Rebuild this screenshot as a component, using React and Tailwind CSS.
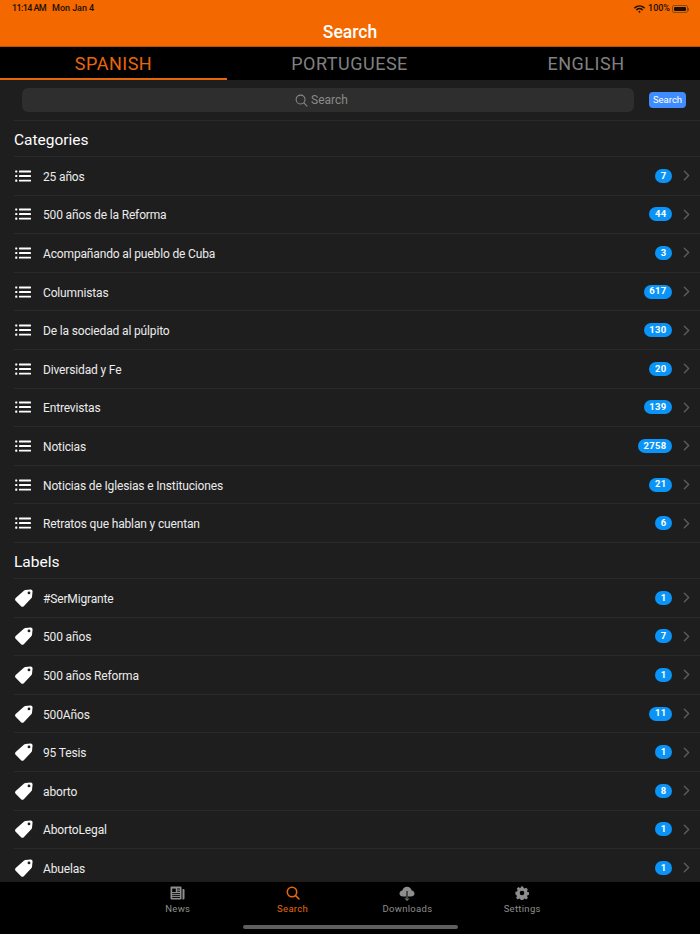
import { ChevronRight } from "lucide-react";

const categories = [
  ["25 años", 7],
  ["500 años de la Reforma", 44],
  ["Acompañando al pueblo de Cuba", 3],
  ["Columnistas", 617],
  ["De la sociedad al púlpito", 130],
  ["Diversidad y Fe", 20],
  ["Entrevistas", 139],
  ["Noticias", 2758],
  ["Noticias de Iglesias e Instituciones", 21],
  ["Retratos que hablan y cuentan", 6],
];

const labels = [
  ["#SerMigrante", 1],
  ["500 años", 7],
  ["500 años Reforma", 1],
  ["500Años", 11],
  ["95 Tesis", 1],
  ["aborto", 8],
  ["AbortoLegal", 1],
  ["Abuelas", 1],
];

function ListIcon() {
  return (
    <svg width="16" height="12" viewBox="0 0 16 12" className="text-white" fill="currentColor">
      <rect x="0.2" y="0.4" width="2.1" height="2.1" rx="0.4" />
      <rect x="0.2" y="5" width="2.1" height="2.1" rx="0.4" />
      <rect x="0.2" y="9.6" width="2.1" height="2.1" rx="0.4" />
      <rect x="4" y="0.5" width="12" height="1.9" rx="0.4" />
      <rect x="4" y="5.1" width="12" height="1.9" rx="0.4" />
      <rect x="4" y="9.7" width="12" height="1.9" rx="0.4" />
    </svg>
  );
}

function TagIcon() {
  return (
    <svg width="18" height="18" viewBox="0.7 0.7 16.6 16.6" className="text-white">
      <path
        fill="currentColor"
        fillRule="evenodd"
        d="M10.2 1.6 15 1.1c1.1-.1 2 .8 1.900 1.900l-.5 4.800c0 .4-.2.8-.5 1.100l-7.100 7.600c-.7.7-1.800.8-2.500.1L1.300 11.600c-.7-.7-.7-1.800 0-2.500l7.800-7c.3-.3.7-.5 1.100-.5ZM13.600 3a1.300 1.300 0 1 0 0 2.600 1.300 1.300 0 0 0 0-2.600Z"
      />
    </svg>
  );
}

function Row({ icon, name, count }) {
  return (
    <div className="flex h-[38.6px] items-center border-b border-[#2a2a2a] pr-[5px]">
      <div className="flex w-[29px] shrink-0 items-center pl-[1px]">{icon}</div>
      <span className="flex-1 pt-[2px] text-[12px] tracking-[-0.15px] text-[#ececec]">{name}</span>
      <span className="flex h-[14px] min-w-[16px] items-center justify-center rounded-full bg-[#0a94f8] px-[5.5px] text-[9.5px] font-bold tracking-[0.3px] text-white">
        {count}
      </span>
      <ChevronRight className="ml-[6px] text-[#5c5c5c]" size={17} strokeWidth={2} />
    </div>
  );
}

function SectionHeader({ title }) {
  return (
    <div className="flex h-[36px] items-center border-b border-[#2a2a2a] pt-[4px] text-[15.5px] text-white">
      {title}
    </div>
  );
}

function TabItem({ label, active, children }) {
  return (
    <div className={`flex w-[114.8px] flex-col items-center ${active ? "text-[#e8660a]" : "text-[#8e8e8e]"}`}>
      <div className="flex h-[18px] items-center">{children}</div>
      <span className="mt-[1px] text-[9.5px] leading-[12px] tracking-[0.3px]">{label}</span>
    </div>
  );
}

export default function App() {
  return (
    <div className="flex h-[934px] w-[700px] flex-col overflow-hidden bg-[#1e1e1e] font-['Roboto',sans-serif]">
      <header className="h-[47px] shrink-0 border-b border-[#b95208] bg-[#f36900]">
        <div className="flex h-[17px] items-center justify-between pl-[12px] pr-[11px] pt-[1px] text-[9px] font-medium text-[#1a1005]">
          <div className="flex gap-[6px]">
            <span className="tracking-[-0.6px]">11:14 AM</span>
            <span className="tracking-[-0.05px]">Mon Jan 4</span>
          </div>
          <div className="flex items-center gap-[2px]">
            <svg width="11" height="8" viewBox="0 0 20 15" fill="none" stroke="currentColor" strokeLinecap="round" strokeWidth="2.8">
              <path d="M1.500 5C6.500.6 13.500.6 18.500 5" />
              <path d="M5 8.700c3-2.600 7-2.600 10 0" />
              <circle cx="10" cy="12.800" r="1.800" fill="currentColor" stroke="none" />
            </svg>
            <span className="ml-[1px]">100%</span>
            <div className="flex items-center">
              <div className="h-[8px] w-[16px] rounded-[2px] border border-[#8a4a08] p-[1px]">
                <div className="h-full w-full rounded-[1px] bg-[#1a1005]" />
              </div>
              <div className="h-[3px] w-[1px] bg-[#8a4a08]" />
            </div>
          </div>
        </div>
        <div className="flex h-[29px] items-center justify-center pt-[1px] text-[17.5px] font-medium text-white">Search</div>
      </header>

      <nav className="flex h-[33px] shrink-0 bg-black text-[18px] tracking-[0.5px]">
        <div className="flex w-[227px] items-center justify-center border-b-2 border-[#e8660a] pt-[1px] text-[#e8660a]">SPANISH</div>
        <div className="flex flex-1 items-center justify-center pb-[1px] text-[#808080]">PORTUGUESE</div>
        <div className="flex w-[228px] items-center justify-center pb-[1px] text-[#808080]">ENGLISH</div>
      </nav>

      <main className="min-h-0 flex-1 overflow-hidden pl-[14px]">
        <div className="flex h-[41px] items-center border-b border-[#2a2a2a] pl-[8px] pr-[14px]">
          <div className="flex h-[24px] w-[612px] items-center justify-center gap-[3px] rounded-[6px] bg-[#2e2e2e] pr-[13px] text-[12px] text-[#8a8a8a]">
            <svg width="13" height="13" viewBox="0 0 14 14" fill="none" stroke="currentColor" strokeWidth="1.1" strokeLinecap="round">
              <circle cx="6" cy="6" r="4.800" />
              <path d="M9.500 9.500 13 13" />
            </svg>
            <span>Search</span>
          </div>
          <button className="ml-auto flex h-[16px] w-[37px] items-center justify-center rounded-[4px] bg-[#3f8cff] text-[9.5px] text-white">
            Search
          </button>
        </div>
        <SectionHeader title="Categories" />
        {categories.map(([name, count]) => (
          <Row key={name} icon={<ListIcon />} name={name} count={count} />
        ))}
        <SectionHeader title="Labels" />
        {labels.map(([name, count]) => (
          <Row key={name} icon={<TagIcon />} name={name} count={count} />
        ))}
      </main>

      <footer className="h-[52px] shrink-0 bg-black pt-[2px]">
        <div className="flex justify-center">
          <TabItem label="News">
            <svg width="15" height="14" viewBox="0 0 15 14">
              <rect x="0.500" y="0.500" width="11" height="13" rx="1" fill="currentColor" />
              <path d="M12.500 3h1.200c.4 0 .8.4.8.8v8.400c0 .7-.6 1.300-1.300 1.300h-.7Z" fill="currentColor" />
              <rect x="2.200" y="2.600" width="3.600" height="3.400" fill="#000" />
              <path d="M7 3h3M7 5.200h3M2.200 7.600H10M2.200 9.600H10M2.200 11.500H10" stroke="#000" strokeWidth="0.9" />
            </svg>
          </TabItem>
          <TabItem label="Search" active>
            <svg width="14" height="14" viewBox="0 0 14 14" fill="none" stroke="currentColor" strokeWidth="1.600" strokeLinecap="round">
              <circle cx="6" cy="6" r="4.700" />
              <path d="M9.600 9.600 13 13" />
            </svg>
          </TabItem>
          <TabItem label="Downloads">
            <svg width="16" height="15" viewBox="0 0 16 15">
              <path d="M4 10.500C2 10.500.5 9.200.5 7.500c0-1.600 1.200-2.800 2.800-3C3.900 2.300 5.800.8 8 .8c2.300 0 4.200 1.500 4.700 3.700 1.600.2 2.800 1.400 2.800 3 0 1.700-1.500 3-3.500 3Z" fill="currentColor" />
              <path d="M8 5v8.500M5.800 11.300 8 13.700l2.200-2.400" fill="none" stroke="#000" strokeWidth="1" />
              <path d="M8 10.500v3.500M6 12.300 8 14.500l2-2.200" fill="none" stroke="currentColor" strokeWidth="1" />
            </svg>
          </TabItem>
          <TabItem label="Settings">
            <svg width="14" height="14" viewBox="0 0 14 14">
              <path
                fill="currentColor"
                fillRule="evenodd"
                d="M5.800.4h2.400l.4 1.700 1.100.5 1.500-.9 1.700 1.700-.9 1.500.5 1.100 1.700.4v2.400l-1.700.4-.5 1.100.9 1.500-1.700 1.700-1.500-.9-1.100.5-.4 1.700H5.800l-.4-1.700-1.100-.5-1.500.9-1.700-1.700.9-1.500-.5-1.100L.4 8.200V5.800l1.700-.4.5-1.100-.9-1.500 1.700-1.700 1.500.9 1.100-.5ZM7 4.700a2.300 2.300 0 1 0 0 4.600 2.300 2.300 0 0 0 0-4.600Z"
              />
            </svg>
          </TabItem>
        </div>
        <div className="mx-auto mt-[10px] h-[4px] w-[215px] rounded-full bg-[#5e5e5e]" />
      </footer>
    </div>
  );
}
